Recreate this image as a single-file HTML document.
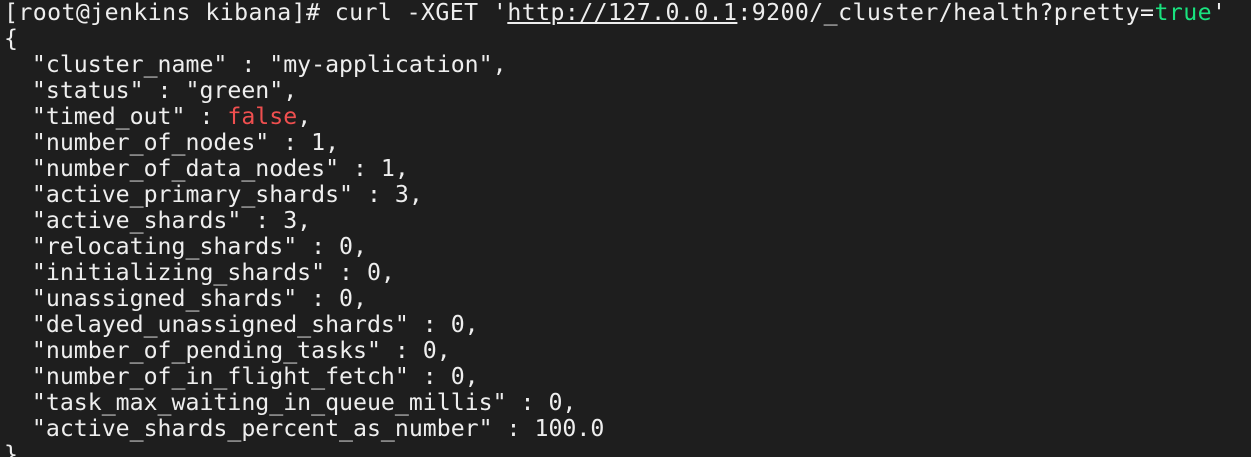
<!DOCTYPE html>
<html><head><meta charset="utf-8"><style>
html,body{margin:0;padding:0;background:#1e1e1e;width:1251px;height:457px;overflow:hidden}
pre{margin:0;padding:0 0 0 4px;font-family:"DejaVu Sans Mono","Liberation Mono",monospace;font-size:23.2px;line-height:26px;color:#eeeeee;position:relative;top:0px}
.l1{letter-spacing:0.42px}
.u{text-decoration:underline}
.g{color:#19e37f}
.r{color:#ef4f4f}
</style></head><body><pre><span class="l1">[root@jenkins kibana]# curl -XGET '<span class="u">http://127.0.0.1</span>:9200/_cluster/health?pretty=<span class="g">true</span>'</span>
{
  "cluster_name" : "my-application",
  "status" : "green",
  "timed_out" : <span class="r">false</span>,
  "number_of_nodes" : 1,
  "number_of_data_nodes" : 1,
  "active_primary_shards" : 3,
  "active_shards" : 3,
  "relocating_shards" : 0,
  "initializing_shards" : 0,
  "unassigned_shards" : 0,
  "delayed_unassigned_shards" : 0,
  "number_of_pending_tasks" : 0,
  "number_of_in_flight_fetch" : 0,
  "task_max_waiting_in_queue_millis" : 0,
  "active_shards_percent_as_number" : 100.0
}</pre></body></html>
